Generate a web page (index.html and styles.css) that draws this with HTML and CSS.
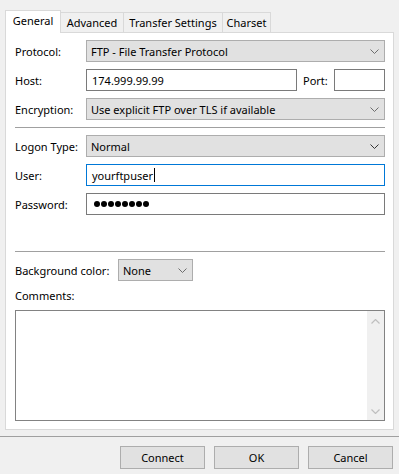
FILE: index.html
```html
<!DOCTYPE html>
<html lang="en">
<head>
    <meta charset="UTF-8">
    <title>Site Manager - General</title>
    <link rel="stylesheet" href="styles.css">
</head>
<body>

<div class="tabs">
    <div class="tab active">General</div>
    <div class="tab t-adv">Advanced</div>
    <div class="tab t-transfer">Transfer Settings</div>
    <div class="tab t-charset">Charset</div>
</div>

<div class="panel">
    <div class="row">
        <label class="lbl">Protocol:</label>
        <div class="select grow">
            <span>FTP - File Transfer Protocol</span>
            <svg class="chev" width="9" height="5" viewBox="0 0 9 5"><polyline points="0.5,0.5 4.5,4.5 8.5,0.5"/></svg>
        </div>
    </div>
    <div class="row">
        <label class="lbl">Host:</label>
        <div class="input host">174.999.99.99</div>
        <label class="lbl-port">Port:</label>
        <div class="input port"></div>
    </div>
    <div class="row">
        <label class="lbl">Encryption:</label>
        <div class="select grow">
            <span>Use explicit FTP over TLS if available</span>
            <svg class="chev" width="9" height="5" viewBox="0 0 9 5"><polyline points="0.5,0.5 4.5,4.5 8.5,0.5"/></svg>
        </div>
    </div>

    <div class="sep"></div>

    <div class="row">
        <label class="lbl">Logon Type:</label>
        <div class="select grow">
            <span>Normal</span>
            <svg class="chev dark" width="9" height="5" viewBox="0 0 9 5"><polyline points="0.5,0.5 4.5,4.5 8.5,0.5"/></svg>
        </div>
    </div>
    <div class="row">
        <label class="lbl">User:</label>
        <div class="input grow focus">yourftpuser<span class="caret"></span></div>
    </div>
    <div class="row">
        <label class="lbl">Password:</label>
        <div class="input grow dots">
            <i></i><i></i><i></i><i></i><i></i><i></i><i></i><i></i>
        </div>
    </div>

    <div class="sep wide"></div>

    <div class="row">
        <label class="lbl-bg">Background color:</label>
        <div class="select bg">
            <span>None</span>
            <svg class="chev" width="9" height="5" viewBox="0 0 9 5"><polyline points="0.5,0.5 4.5,4.5 8.5,0.5"/></svg>
        </div>
    </div>
    <div class="comments-lbl">Comments:</div>
    <div class="textarea">
        <div class="text-body"></div>
        <div class="scrollbar">
            <svg width="9" height="5" viewBox="0 0 9 5"><polyline points="0.5,4.5 4.5,0.5 8.5,4.5"/></svg>
            <svg width="9" height="5" viewBox="0 0 9 5"><polyline points="0.5,0.5 4.5,4.5 8.5,0.5"/></svg>
        </div>
    </div>
</div>

<div class="footer">
    <button class="btn">Connect</button>
    <button class="btn">OK</button>
    <button class="btn">Cancel</button>
</div>

</body>
</html>
```

FILE: styles.css
```css
/* dialog base */
body {
    margin: 0;
    background: #f0f0f0;
    font-family: "Noto Sans", "Liberation Sans", sans-serif;
    font-size: 11px;
    color: #000;
}

/* tab strip */
.tabs {
    display: flex;
    align-items: flex-end;
    padding: 12px 0 0 5px;
}
.tab {
    box-sizing: border-box;
    height: 20px;
    line-height: 19px;
    text-align: center;
    border: 1px solid #d9d9d9;
    border-bottom: none;
    margin-left: -1px;
    background: #f0f0f0;
}
.tab.active {
    position: relative; /* sits over the panel border */
    z-index: 1;
    width: 56px;
    height: 23px;
    line-height: 20px;
    margin-left: 0;
    margin-top: -2px;
    margin-bottom: -1px;
    background: #fff;
}
.t-adv { width: 64px; }
.t-transfer { width: 100px; }
.t-charset { width: 49px; }

/* white tab page */
.panel {
    margin: 0 5px;
    padding: 7px 8px 8px 9px;
    background: #fff;
    border: 1px solid #d9d9d9;
}

.row {
    display: flex;
    align-items: center;
    height: 22px;
    margin-bottom: 7px;
}
.lbl {
    width: 71px;
    flex: none;
}
.lbl-port {
    margin: 0 6px 0 6px;
}
.lbl-bg {
    width: 103px;
    flex: none;
}
.grow {
    flex: 1;
}

.select {
    box-sizing: border-box;
    height: 22px;
    display: flex;
    align-items: center;
    justify-content: space-between;
    padding: 0 5px 0 4px;
    background: #e1e1e1;
    border: 1px solid #adadad;
}
.select.bg {
    width: 75px;
}
.chev {
    fill: none;
    stroke: #6d6d6d;
    stroke-width: 1;
}
.chev.dark {
    stroke: #333;
}

.input {
    box-sizing: border-box;
    height: 22px;
    display: flex;
    align-items: center;
    padding: 0 5px;
    border: 1px solid #7a7a7a;
    background: #fff;
}
.input.host {
    width: 211px;
}
.input.port {
    width: 51px;
}
.input.focus {
    border-color: #0078d7;
}
.caret {
    display: inline-block;
    width: 1px;
    height: 14px;
    background: #000;
    margin-left: 1px;
}
.dots {
    gap: 1px;
    padding-left: 7px;
}
.dots i {
    width: 6px;
    height: 6px;
    border-radius: 50%;
    background: #000;
}

.sep {
    height: 1px;
    background: #a0a0a0;
    margin-bottom: 7px;
}
.sep.wide {
    margin-top: 36px;
}

.comments-lbl {
    height: 16px;
    line-height: 16px;
    margin-bottom: 6px;
}

.textarea {
    display: flex;
    height: 109px;
    border: 1px solid #828282;
}
.text-body {
    flex: 1;
}
.scrollbar {
    width: 17px;
    background: #f0f0f0;
    display: flex;
    flex-direction: column;
    justify-content: space-between;
    align-items: center;
    padding: 8px 0 6px;
}
.scrollbar svg {
    fill: none;
    stroke: #bfbfbf;
    stroke-width: 1.2;
}

/* bottom buttons */
.footer {
    display: flex;
    justify-content: flex-end;
    gap: 9px;
    margin-top: 6px;
    padding: 9px 6px 0 0;
    border-top: 1px solid #a0a0a0;
}
.btn {
    width: 85px;
    height: 23px;
    font-family: inherit;
    font-size: 11px;
    background: #e1e1e1;
    border: 1px solid #adadad;
    padding: 0;
}
```
